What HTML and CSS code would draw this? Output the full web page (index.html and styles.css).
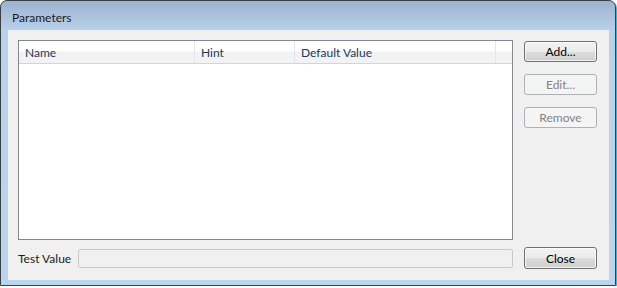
FILE: index.html
```html
<!DOCTYPE html>
<html lang="en">
<head>
  <meta charset="UTF-8" />
  <title>Parameters</title>
  <link rel="stylesheet" href="styles.css">
</head>
<body>

<div class="window">
  <div class="titlebar">Parameters</div>

  <div class="client">
    <div class="top-row">
      <div class="listview">
        <div class="lv-header">
          <div class="col col-name">Name</div>
          <div class="col col-hint">Hint</div>
          <div class="col col-default">Default Value</div>
          <div class="col col-rest"></div>
        </div>
        <div class="lv-body"></div>
      </div>

      <div class="side-buttons">
        <button class="btn">Add...</button>
        <button class="btn" disabled>Edit...</button>
        <button class="btn" disabled>Remove</button>
      </div>
    </div>

    <div class="bottom-row">
      <label class="test-label">Test Value</label>
      <div class="test-input"></div>
      <button class="btn">Close</button>
    </div>
  </div>
</div>

</body>
</html>
```

FILE: styles.css
```css
body {
  margin: 0;
  padding: 0;
  background: #ffffff;
  font-family: "Lato", "Noto Sans", sans-serif;
  font-size: 12px;
  color: #000;
}
.window {
  box-sizing: border-box;
  width: 616px;
  height: 286px;
  border: 1px solid #3b3f45;
  border-radius: 7px 7px 0 0;
  background: linear-gradient(#9cb4d0 0px, #b9d1ea 30px, #bcd4ec 100%);
  box-shadow: 1px 1px 0 #3fb4cc;
  display: flex;
  flex-direction: column;
}
.titlebar {
  height: 29px;
  padding-left: 11px;
  line-height: 34px;
  color: #1b1b1b;
  font-size: 12px;
}
.client {
  flex-grow: 1;
  margin: 0 6px 5px 7px;
  background: #f0f0f0;
  padding: 10px 12px 0 10px;
  display: flex;
  flex-direction: column;
}
.top-row {
  display: flex;
  gap: 11px;
}
.listview {
  box-sizing: border-box;
  width: 496px;
  height: 200px;
  border: 1px solid #828790;
  background: #fff;
}
.lv-header {
  display: flex;
  height: 22px;
  border-bottom: 1px solid #d5d5d5;
  background: linear-gradient(#ffffff 0%, #ffffff 45%, #f1f2f4 50%, #f1f2f4 100%);
}
.lv-header .col {
  box-sizing: border-box;
  height: 22px;
  line-height: 23px;
  padding-left: 6px;
  color: #1e395b;
  border-right: 1px solid #e3e5e8;
}
.col-name { width: 176px; }
.col-hint { width: 100px; }
.col-default { width: 201px; }
.col-rest { flex-grow: 1; border-right: none !important; }
.side-buttons {
  display: flex;
  flex-direction: column;
  gap: 12px;
  padding-top: 1px;
}
.btn {
  box-sizing: border-box;
  width: 73px;
  height: 21px;
  padding: 0;
  border: 1px solid #707070;
  border-radius: 3px;
  background: linear-gradient(#f2f2f2 0%, #ebebeb 50%, #dddddd 51%, #cfcfcf 100%);
  box-shadow: inset 0 0 0 1px rgba(255,255,255,0.7);
  font-family: inherit;
  font-size: 12px;
  font-weight: 400;
  color: #000;
}
.btn:disabled {
  border-color: #adb2b5;
  background: #f4f4f4;
  box-shadow: none;
  color: #838383;
}
.bottom-row {
  display: flex;
  align-items: center;
  margin-top: 7px;
  height: 22px;
}
.test-label {
  width: 60px;
  color: #1b1b1b;
}
.test-input {
  box-sizing: border-box;
  width: 436px;
  height: 19px;
  border: 1px solid #c9c9c9;
  border-radius: 2px;
  background: #f0f0f0;
  margin-right: 11px;
}
.bottom-row .btn {
  height: 22px;
}
```
